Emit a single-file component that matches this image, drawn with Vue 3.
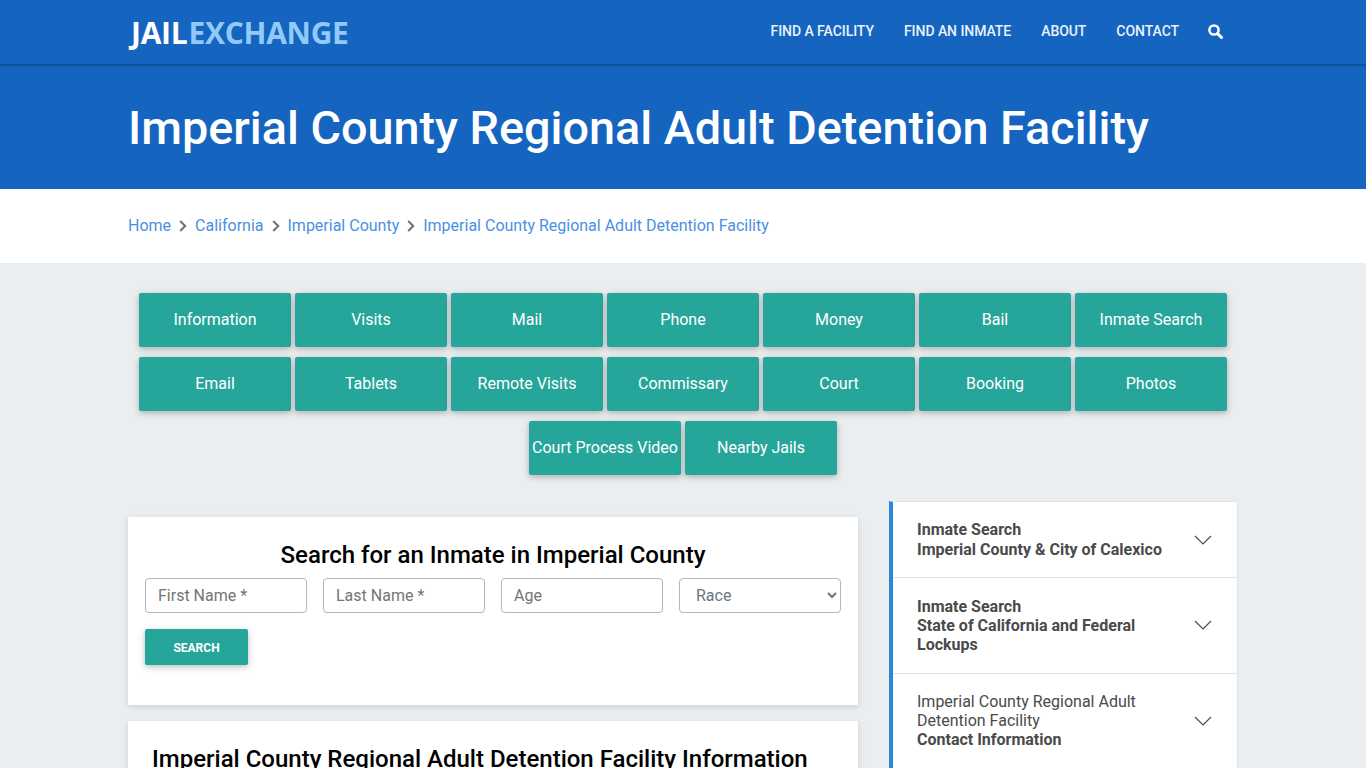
<script setup>
const nav = ['FIND A FACILITY', 'FIND AN INMATE', 'ABOUT', 'CONTACT']
const crumbs = ['Home', 'California', 'Imperial County']
const buttons = ['Information', 'Visits', 'Mail', 'Phone', 'Money', 'Bail', 'Inmate Search', 'Email', 'Tablets', 'Remote Visits', 'Commissary', 'Court', 'Booking', 'Photos', 'Court Process Video', 'Nearby Jails']
</script>

<template>
  <div class="page">
    <header class="topbar">
      <div class="container topbar-in">
        <a class="logo"><span class="logo-a">JAIL</span><span class="logo-b">EXCHANGE</span></a>
        <nav class="nav">
          <a v-for="n in nav" :key="n" class="nav-link">{{ n }}</a>
          <svg class="search-ico" width="15" height="15" viewBox="0 0 15 15" aria-hidden="true">
            <circle cx="6" cy="6" r="4.6" fill="none" stroke="#fff" stroke-width="2.5" />
            <path d="M9.6 9.6 L13.5 13.5" stroke="#fff" stroke-width="3" stroke-linecap="round" />
          </svg>
        </nav>
      </div>
    </header>

    <section class="hero">
      <div class="container">
        <h1>Imperial County Regional Adult Detention Facility</h1>
      </div>
    </section>

    <section class="crumbbar">
      <div class="container crumbs">
        <template v-for="c in crumbs" :key="c">
          <a class="crumb">{{ c }}</a>
          <svg class="sep" width="8" height="12" viewBox="0 0 8 12" aria-hidden="true">
            <path d="M1.2 1 L6.2 6 L1.2 11" fill="none" stroke="#6c757d" stroke-width="2.1" />
          </svg>
        </template>
        <a class="crumb">Imperial County Regional Adult Detention Facility</a>
      </div>
    </section>

    <main class="container">
      <div class="btns">
        <a v-for="b in buttons" :key="b" class="tile">{{ b }}</a>
      </div>

      <div class="columns">
        <div class="left">
          <form class="card search" @submit.prevent>
            <h2 class="search-title">Search for an Inmate in Imperial County</h2>
            <div class="fields">
              <input class="field" placeholder="First Name *" />
              <input class="field" placeholder="Last Name *" />
              <input class="field" placeholder="Age" />
              <select class="field select">
                <option>Race</option>
              </select>
            </div>
            <button class="go" type="submit">SEARCH</button>
          </form>
          <div class="card info">
            <h2 class="info-title">Imperial County Regional Adult Detention Facility Information</h2>
          </div>
        </div>

        <aside class="side">
          <div class="item first">
            <div class="item-text tall"><b>Inmate Search</b><br /><b>Imperial County &amp; City of Calexico</b></div>
            <svg class="chev" width="18" height="10" viewBox="0 0 18 10" aria-hidden="true"><path d="M1 1 L9 9 L17 1" fill="none" stroke="#4a4a4a" stroke-width="1.1" /></svg>
          </div>
          <div class="item second">
            <div class="item-text"><b>Inmate Search</b><br /><b>State of California and Federal Lockups</b></div>
            <svg class="chev up" width="18" height="10" viewBox="0 0 18 10" aria-hidden="true"><path d="M1 1 L9 9 L17 1" fill="none" stroke="#4a4a4a" stroke-width="1.1" /></svg>
          </div>
          <div class="item third">
            <div class="item-text">Imperial County Regional Adult Detention Facility<br /><b>Contact Information</b></div>
            <svg class="chev" width="18" height="10" viewBox="0 0 18 10" aria-hidden="true"><path d="M1 1 L9 9 L17 1" fill="none" stroke="#4a4a4a" stroke-width="1.1" /></svg>
          </div>
        </aside>
      </div>
    </main>
  </div>
</template>

<style>
html, body { margin: 0; height: 768px; overflow: hidden; background: #eaeef1; }
</style>

<style scoped>
.page { font-family: Roboto, "Liberation Sans", sans-serif; height: 768px; overflow: hidden; background: #eaeef1; }
.container { width: 1110px; margin: 0 auto; }
.topbar { height: 64px; background: #1565c0; border-bottom: 1px solid #0f4f9c; box-shadow: 0 1px 2px rgba(0,0,0,.2); position: relative; }
.topbar-in { display: flex; align-items: center; justify-content: space-between; height: 64px; }
.logo { font-family: "Open Sans", sans-serif; font-weight: 700; font-size: 30px; letter-spacing: -.28px; padding-left: 3px; line-height: 1; margin-top: 2px; }
.logo-a { color: #fff; }
.logo-b { color: #90caf9; margin-left: 1px; }
.nav { display: flex; align-items: center; gap: 30px; padding-right: 15px; margin-top: -2px; }
.nav-link { color: #e9f2fb; font-size: 14px; font-weight: 500; letter-spacing: -.06px; }
.search-ico { display: block; margin-left: -1px; }
.hero { height: 124px; background: #1565c0; display: flex; align-items: center; }
.hero h1 { margin: 0; padding-top: 2px; color: #fff; font-size: 46.75px; font-weight: 500; line-height: 1.2; letter-spacing: 0; }
.crumbbar { background: #fff; height: 74px; display: flex; align-items: center; }
.crumbs { display: flex; align-items: center; gap: 8px; font-size: 16px; padding-bottom: 2px; }
.crumb { color: #4a90e2; }
.sep { margin: 2px 0 0; }
.btns { display: flex; flex-wrap: wrap; justify-content: center; gap: 10px 4px; padding-top: 30px; }
.tile { width: 152px; height: 54px; box-sizing: border-box; padding-bottom: 2px; display: flex; align-items: center; justify-content: center; background: #26a69a; color: #fff; font-size: 16px; border-radius: 2px; box-shadow: 0 2px 5px rgba(0,0,0,.16), 0 2px 10px rgba(0,0,0,.12); white-space: nowrap; }
.columns { display: flex; justify-content: space-between; align-items: flex-start; margin-top: 26px; }
.left { width: 730px; padding-top: 16px; display: flex; flex-direction: column; gap: 16px; }
.card { background: #fff; box-shadow: 0 2px 5px rgba(0,0,0,.08), 0 2px 10px rgba(0,0,0,.06); }
.search { height: 188px; box-sizing: border-box; padding: 24px 17px 0; }
.search-title { margin: 0 0 9px; text-align: center; font-size: 24px; font-weight: 500; line-height: 28px; color: #000; }
.fields { display: flex; gap: 16px; }
.field { width: 162px; height: 35px; box-sizing: border-box; border: 1px solid #b5b5b5; border-radius: 4px; padding: 0 12px; background: #fff; font-family: inherit; font-size: 16px; color: #6c757d; outline: none; }
.field::placeholder { color: #757575; opacity: 1; }
.go { display: block; margin-top: 16px; width: 103px; height: 36px; border: 0; padding: 1px 0 0; border-radius: 2px; background: #26a69a; color: #fff; font-family: inherit; font-size: 12px; font-weight: 700; box-shadow: 0 2px 5px rgba(0,0,0,.16), 0 2px 10px rgba(0,0,0,.12); }
.info { padding: 24px 24px 30px; height: 200px; box-sizing: border-box; }
.info-title { margin: 0; font-size: 24px; font-weight: 500; line-height: 29px; color: #000; white-space: nowrap; }
.side { width: 349px; box-sizing: border-box; margin-left: 0; background: #fff; border-left: 4px solid #2a88dc; border-top: 1px solid #dfe3e6; border-right: 1px solid #dfe3e6; }
.item { display: flex; align-items: center; justify-content: space-between; box-sizing: border-box; padding: 0 25px 0 24px; border-bottom: 1px solid #dfe3e6; color: #4a4a4a; font-size: 16px; line-height: 19px; }
.first { height: 76px; }
.second { height: 96px; }
.third { height: 140px; align-items: flex-start; padding-top: 18px; }
.third .chev { margin-top: 24px; }
.chev.up { margin-top: -2px; }
.item-text { width: 250px; }
.item-text b { font-weight: 700; }
.tall { line-height: 20px; width: 260px; white-space: nowrap; }
.chev { flex: none; }
</style>
